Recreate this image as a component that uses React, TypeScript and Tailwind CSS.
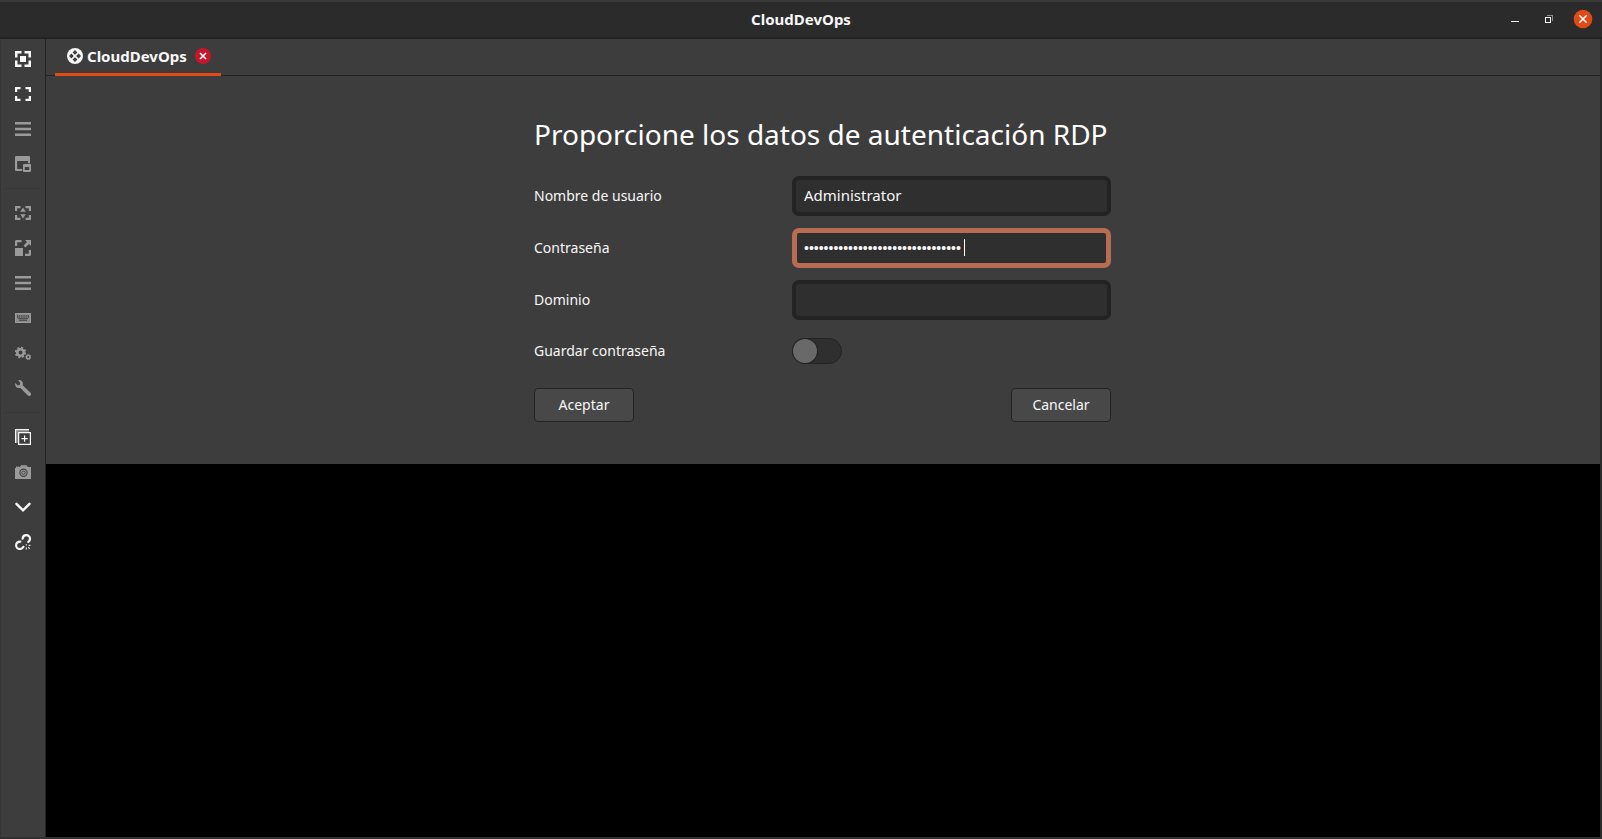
import { useState, type ReactNode } from "react";

function Icon({ children, size = 16 }: { children: ReactNode; size?: number }) {
  return (
    <svg width={size} height={size} viewBox={`0 0 ${size} ${size}`} fill="currentColor" aria-hidden="true">
      {children}
    </svg>
  );
}

const icons = {
  fit: (
    <path d="M0 0h6.500v2.500h-4v4H0zM9.500 0H16v6.500h-2.500v-4h-4zM0 9.500h2.500v4h4V16H0zM13.500 9.500H16V16H9.500v-2.500h4zM5 5h6v6H5z" />
  ),
  fullscreen: (
    <path d="M0 1h5.500v2.200H2.200V6H0zM10.500 1H16v5h-2.200V3.200h-3.300zM0 10h2.200v2.800h3.300V15H0zM13.800 10H16v5h-5.500v-2.200h3.300z" />
  ),
  menu: <path d="M0 1h16v2.500H0zM0 6.750h16v2.500H0zM0 12.500h16V15H0z" />,
  windows: (
    <>
      <path fillRule="evenodd" d="M1 0h13a1 1 0 0 1 1 1v14H1a1 1 0 0 1-1-1V1a1 1 0 0 1 1-1zm1.200 5v8H13V5z" />
      <path fill="#3d3d3d" d="M7.300 7.300H16V16H7.300z" />
      <path fillRule="evenodd" d="M9 8h6a1 1 0 0 1 1 1v6a1 1 0 0 1-1 1H9a1 1 0 0 1-1-1V9a1 1 0 0 1 1-1zm.800 3v3h4.400v-3z" />
    </>
  ),
  dynamic: (
    <path d="M0 1h5.500v2.200H2.200V6H0zM10.500 1H16v5h-2.200V3.200h-3.300zM0 10h2.200v2.800h3.300V15H0zM13.800 10H16v5h-5.500v-2.200h3.300zM8 2.600l2.800 4.200H5.200zM8 13.400L5.200 9.200h5.600z" />
  ),
  scale: (
    <path d="M0 8h8v8H0zM1 0h5.500v2.200H2.200V6H0V1zM13.800 10H16v5l-1 1h-5v-2.200h3.800zM10 0h6v6l-2-2-3.600 3.400-1.800-1.800L12 2z" />
  ),
  keyboard: (
    <>
      <path opacity=".85" d="M0 3h16v10H0z" />
      <path fill="none" stroke="currentColor" d="M.5 3.500h15v9H.5z" />
      <path fill="#505050" d="M2 5h1.300v3H2zM4.200 5h1.200v3H4.200zM6.300 5h1.200v3H6.300zM8.400 5h1.200v3H8.400zM10.500 5h1.200v3h-1.200zM12.700 5H14v3h-1.300zM3 8h10v1H3zM4 9.500h8V11H4z" />
    </>
  ),
  gears: (
    <>
      <circle cx="5.500" cy="7.500" r="3.300" fill="none" stroke="currentColor" strokeWidth="2.600" />
      <circle cx="5.500" cy="7.500" r="4.900" fill="none" stroke="currentColor" strokeWidth="1.600" strokeDasharray="2 1.848" />
      <circle cx="13.300" cy="12" r="1.800" fill="none" stroke="currentColor" strokeWidth="1.500" />
      <circle cx="13.300" cy="12" r="2.500" fill="none" stroke="currentColor" strokeWidth=".8" strokeDasharray="1 .963" />
    </>
  ),
  wrench: (
    <path d="M3.200.200C5.500-.4 7.800 1.200 7.900 3.700c0 .6-.1 1.100-.3 1.600l7.700 7.200c1 .9 1 2.100.2 2.900-.8.800-2 .7-2.900-.2L5.400 7.900C3 8.700.3 7.100.1 4.400c0-.5 0-.9.200-1.300l2.500 2.300 2-.4.500-2z" />
  ),
  duplicate: (
    <>
      <path opacity=".5" d="M1 1h13v1.700H2.700V14H1z" />
      <path d="M0 0h14v1H1v13H0z" />
      <path fill="none" stroke="currentColor" strokeWidth="1.200" d="M3.600 3.600h11.800v11.800H3.600z" />
      <path d="M9 6.500h1.200V9h2.500v1.200h-2.500v2.500H9v-2.500H6.500V9H9z" />
    </>
  ),
  camera: (
    <>
      <path d="M0 4h1V2h3v1h1l1-1.700h5.500L12.800 3H16v12H0z" />
      <path fill="#454545" d="M1.500 2h2v1h-2z" />
      <circle cx="8.500" cy="8.700" r="3.600" fill="none" stroke="#454545" strokeWidth="1.200" />
      <circle cx="8.500" cy="8.700" r="1.700" fill="none" stroke="#454545" strokeWidth="1" />
    </>
  ),
  chevron: (
    <path fill="none" stroke="currentColor" strokeWidth="2.500" strokeLinecap="round" d="M1.500 4.800L8 11.300l6.500-6.500" />
  ),
  disconnect: (
    <>
      <path
        fill="none"
        stroke="currentColor"
        strokeWidth="2.200"
        strokeLinecap="round"
        d="M7.600 4.600C7.800 2.700 9.200 1.100 11.200 1.100c2.200 0 3.800 1.600 3.800 3.700 0 1.300-.6 2.400-1.700 3.100M5.300 7.600C2.800 7.500 1.100 9.200 1.100 11.300c0 2.100 1.600 3.700 3.700 3.700 1.700 0 2.900-.8 3.600-2.200"
      />
      <path
        fill="none"
        stroke="currentColor"
        strokeWidth="1.200"
        d="M10.800 10.500l1 .9M13.600 11.300h1.900M11.300 13.400v2.200M13.200 13.200l1.600 1.600"
        opacity=".85"
      />
    </>
  ),
};

type Tool = { label: string; icon: ReactNode; active?: boolean };

const toolGroups: Tool[][] = [
  [
    { label: "Ajustar ventana", icon: icons.fit, active: true },
    { label: "Pantalla completa", icon: icons.fullscreen, active: true },
    { label: "Opciones de pantalla", icon: icons.menu },
    { label: "Cambiar de página", icon: icons.windows },
  ],
  [
    { label: "Resolución dinámica", icon: icons.dynamic },
    { label: "Modo escalado", icon: icons.scale },
    { label: "Opciones de escalado", icon: icons.menu },
    { label: "Capturar teclado", icon: icons.keyboard },
    { label: "Preferencias", icon: icons.gears },
    { label: "Herramientas", icon: icons.wrench },
  ],
  [
    { label: "Duplicar conexión", icon: icons.duplicate, active: true },
    { label: "Captura de pantalla", icon: icons.camera },
    { label: "Minimizar ventana", icon: icons.chevron, active: true },
    { label: "Desconectar", icon: icons.disconnect, active: true },
  ],
];

function TitleBar() {
  return (
    <header className="grid h-[39px] shrink-0 grid-cols-[1fr_auto_1fr] items-center border-t-2 border-b-2 border-t-[#3a3a3a] border-b-[#222222] bg-[#2b2b2b] px-[9px] pb-px">
      <span />
      <h1 className="text-[15px] leading-5 font-bold">CloudDevOps</h1>
      <div className="flex items-center justify-end gap-3.5">
        <button aria-label="Minimizar" className="flex size-5 items-center justify-center">
          <Icon>
            <path d="M4 10h8v1H4z" />
          </Icon>
        </button>
        <button aria-label="Restaurar" className="flex size-5 items-center justify-center">
          <Icon>
            <path fill="#8c8c8c" d="M6 4h6v6h-1V5H6z" />
            <path fillRule="evenodd" d="M4 6h6v6H4zm1 1v4h4V7z" />
          </Icon>
        </button>
        <button aria-label="Cerrar" className="flex size-5 items-center justify-center">
          <Icon size={20}>
            <circle cx="10" cy="10" r="9.300" fill="#e04a16" />
            <path fill="none" stroke="#fff" strokeWidth="1.500" d="M6.300 6.300l7.400 7.400M13.700 6.300l-7.400 7.400" />
          </Icon>
        </button>
      </div>
    </header>
  );
}

function Toolbar() {
  return (
    <nav aria-label="Herramientas" className="flex w-[46px] shrink-0 flex-col gap-px border-r border-l border-r-[#232323] border-l-[#353535] pt-[3px]">
      {toolGroups.map((group, index) => (
        <div key={index} className="flex flex-col gap-px">
          {index > 0 && <hr className="mx-1 my-1.5 border-t border-[#363636]" />}
          {group.map((tool) => (
            <button
              key={tool.label}
              aria-label={tool.label}
              className={`flex h-[34px] items-center justify-center ${tool.active ? "text-[#f7f7f7]" : "text-[#9a9a9a]"}`}
            >
              <Icon>{tool.icon}</Icon>
            </button>
          ))}
        </div>
      ))}
    </nav>
  );
}

function TabBar() {
  return (
    <div className="flex h-[37px] shrink-0 border-b border-[#232323] pl-[9px]">
      <div className="-mb-px flex items-center border-b-3 border-[#e04a16] pr-2.5 pl-3">
        <button className="flex items-center gap-1">
          <Icon>
            <circle cx="8" cy="8" r="8" />
            <path
              fill="#3d3d3d"
              d="M8 2l2.400 2.400L8 6.800 5.600 4.400zM8 9.200l2.400 2.400L8 14l-2.400-2.400zM4.400 5.600L6.800 8l-2.400 2.400L2 8zM11.600 5.600L14 8l-2.400 2.400L9.200 8z"
            />
          </Icon>
          <span className="text-[15px] leading-5 font-bold">CloudDevOps</span>
        </button>
        <button aria-label="Cerrar pestaña" className="ml-2">
          <Icon>
            <circle cx="8" cy="8" r="8" fill="#c7162b" />
            <path fill="none" stroke="#fff" strokeWidth="1.600" d="M5 5l6 6M11 5l-6 6" />
          </Icon>
        </button>
      </div>
    </div>
  );
}

const fieldClass = "h-10 w-full rounded-[7px] bg-[#2f2f2f] outline-none";
const buttonClass = "h-[34px] w-[100px] rounded-[4px] border border-[#232323] bg-[#484848]";

function LoginForm() {
  const [user, setUser] = useState("Administrator");
  const [password, setPassword] = useState("a".repeat(32));
  const [domain, setDomain] = useState("");
  const [save, setSave] = useState(false);

  return (
    <section className="flex justify-center bg-[#3d3d3d] pt-[38px] pr-px pb-[42px]">
      <form className="w-[577px]" onSubmit={(event) => event.preventDefault()}>
        <h2 className="mb-[22px] text-[28px] leading-10 whitespace-nowrap text-white">
          Proporcione los datos de autenticación RDP
        </h2>
        <div className="grid grid-cols-[1fr_319px] items-center gap-y-3 text-[14px] leading-5">
          <label htmlFor="user">Nombre de usuario</label>
          <input
            id="user"
            value={user}
            onChange={(event) => setUser(event.target.value)}
            className={`${fieldClass} border-4 border-[#232323] px-2 pb-0.5 text-[15px]`}
          />
          <label htmlFor="password">Contraseña</label>
          <div className="relative">
            <input
              id="password"
              type="password"
              value={password}
              onChange={(event) => setPassword(event.target.value)}
              className={`${fieldClass} block border-5 border-[#b86d52] px-[7px] font-['Liberation_Sans',sans-serif] text-[14px] caret-transparent`}
            />
            <span className="absolute top-[11px] left-[172px] h-[17px] w-px bg-white" />
          </div>
          <label htmlFor="domain">Dominio</label>
          <input
            id="domain"
            value={domain}
            onChange={(event) => setDomain(event.target.value)}
            className={`${fieldClass} border-4 border-[#232323] px-2 pb-0.5 text-[15px]`}
          />
          <label htmlFor="save" className="leading-[38px]">Guardar contraseña</label>
          <input
            id="save"
            type="checkbox"
            role="switch"
            checked={save}
            onChange={(event) => setSave(event.target.checked)}
            className="h-[26px] w-[50px] appearance-none rounded-full border border-[#232323] bg-[#2f2f2f] before:block before:size-6 before:rounded-full before:bg-[#696969] before:shadow-[0_0_0_1px_#232323] checked:bg-[#e04a16] checked:before:ml-6"
          />
        </div>
        <div className="mt-[18px] flex justify-between text-[14px] leading-5">
          <button type="submit" className={buttonClass}>
            Aceptar
          </button>
          <button type="button" className={buttonClass}>
            Cancelar
          </button>
        </div>
      </form>
    </section>
  );
}

export default function App() {
  return (
    <div className="flex min-h-screen flex-col bg-[#3d3d3d] font-['Noto_Sans','Open_Sans',sans-serif] text-[#f7f7f7]">
      <TitleBar />
      <div className="flex grow border-b-2 border-[#303030]">
        <Toolbar />
        <main className="flex min-w-0 grow flex-col border-r-2 border-[#2b2b2b] bg-[#3d3d3d]">
          <TabBar />
          <LoginForm />
          <div className="grow bg-black" />
        </main>
      </div>
    </div>
  );
}
